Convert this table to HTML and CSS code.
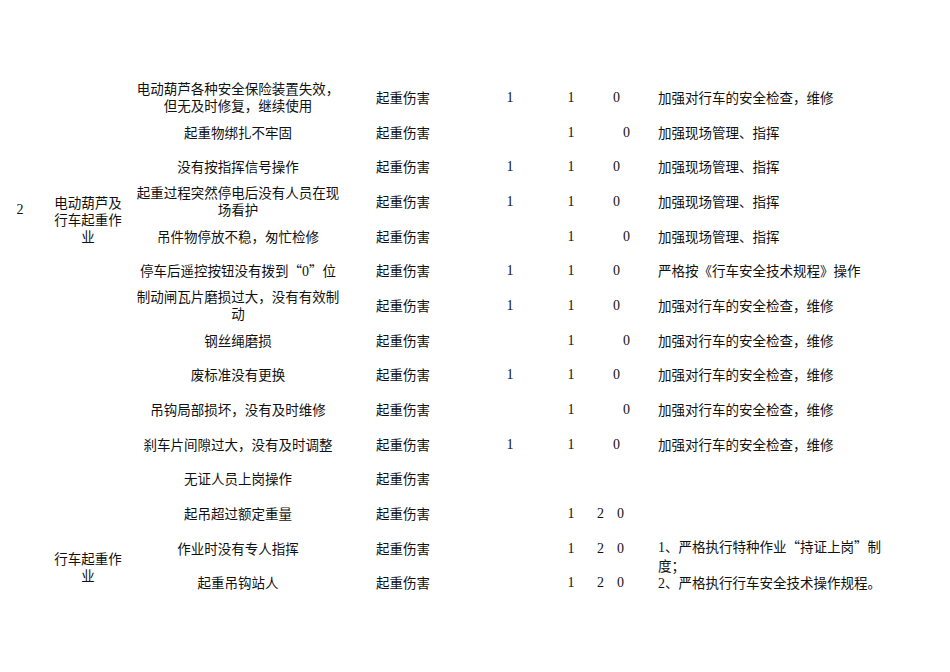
FILE: index.html
```html
<!DOCTYPE html>
<html lang="zh-CN">
<head>
<meta charset="utf-8">
<link rel="stylesheet" href="styles.css">
<title>危险源辨识</title>
</head>
<body>
<div class="sheet">
  <!-- row 1 -->
  <div class="c c1 span8"><span class="n">2</span></div>
  <div class="c c2 span8"><p class="t">电动葫芦及<br>行车起重作<br>业</p></div>
  <div class="c c3"><p class="t">电动葫芦各种安全保险装置失效，<br>但无及时修复，继续使用</p></div>
  <div class="c c4">起重伤害</div>
  <div class="c c5 n">1</div>
  <div class="c c6 n">1</div>
  <div class="c c7 n">0</div>
  <div class="c c8">加强对行车的安全检查，维修</div>
  <!-- row 2 -->
  <div class="c c3">起重物绑扎不牢固</div>
  <div class="c c4">起重伤害</div>
  <div class="c c5 n"></div>
  <div class="c c6 n">1</div>
  <div class="c c7 n shift">0</div>
  <div class="c c8">加强现场管理、指挥</div>
  <!-- row 3 -->
  <div class="c c3">没有按指挥信号操作</div>
  <div class="c c4">起重伤害</div>
  <div class="c c5 n">1</div>
  <div class="c c6 n">1</div>
  <div class="c c7 n">0</div>
  <div class="c c8">加强现场管理、指挥</div>
  <!-- row 4 -->
  <div class="c c3"><p class="t">起重过程突然停电后没有人员在现<br>场看护</p></div>
  <div class="c c4">起重伤害</div>
  <div class="c c5 n">1</div>
  <div class="c c6 n">1</div>
  <div class="c c7 n">0</div>
  <div class="c c8">加强现场管理、指挥</div>
  <!-- row 5 -->
  <div class="c c3">吊件物停放不稳，匆忙检修</div>
  <div class="c c4">起重伤害</div>
  <div class="c c5 n"></div>
  <div class="c c6 n">1</div>
  <div class="c c7 n shift">0</div>
  <div class="c c8">加强现场管理、指挥</div>
  <!-- row 6 -->
  <div class="c c3"><p class="t">停车后遥控按钮没有拨到“<span class="n">0</span>”位</p></div>
  <div class="c c4">起重伤害</div>
  <div class="c c5 n">1</div>
  <div class="c c6 n">1</div>
  <div class="c c7 n">0</div>
  <div class="c c8">严格按《行车安全技术规程》操作</div>
  <!-- row 7 -->
  <div class="c c3"><p class="t">制动闸瓦片磨损过大，没有有效制<br>动</p></div>
  <div class="c c4">起重伤害</div>
  <div class="c c5 n">1</div>
  <div class="c c6 n">1</div>
  <div class="c c7 n">0</div>
  <div class="c c8">加强对行车的安全检查，维修</div>
  <!-- row 8 -->
  <div class="c c3">钢丝绳磨损</div>
  <div class="c c4">起重伤害</div>
  <div class="c c5 n"></div>
  <div class="c c6 n">1</div>
  <div class="c c7 n shift">0</div>
  <div class="c c8">加强对行车的安全检查，维修</div>
  <!-- row 9 -->
  <div class="c c1"></div>
  <div class="c c2"></div>
  <div class="c c3">废标准没有更换</div>
  <div class="c c4">起重伤害</div>
  <div class="c c5 n">1</div>
  <div class="c c6 n">1</div>
  <div class="c c7 n">0</div>
  <div class="c c8">加强对行车的安全检查，维修</div>
  <!-- row 10 -->
  <div class="c c1"></div>
  <div class="c c2"></div>
  <div class="c c3">吊钩局部损坏，没有及时维修</div>
  <div class="c c4">起重伤害</div>
  <div class="c c5 n"></div>
  <div class="c c6 n">1</div>
  <div class="c c7 n shift">0</div>
  <div class="c c8">加强对行车的安全检查，维修</div>
  <!-- row 11 -->
  <div class="c c1"></div>
  <div class="c c2"></div>
  <div class="c c3">刹车片间隙过大，没有及时调整</div>
  <div class="c c4">起重伤害</div>
  <div class="c c5 n">1</div>
  <div class="c c6 n">1</div>
  <div class="c c7 n">0</div>
  <div class="c c8">加强对行车的安全检查，维修</div>
  <!-- row 12 -->
  <div class="c c1"></div>
  <div class="c c2"></div>
  <div class="c c3">无证人员上岗操作</div>
  <div class="c c4">起重伤害</div>
  <div class="c c5 n"></div>
  <div class="c c6 n"></div>
  <div class="c c7 n"></div>
  <div class="c c8"></div>
  <!-- row 13 -->
  <div class="c c1"></div>
  <div class="c c2"></div>
  <div class="c c3">起吊超过额定重量</div>
  <div class="c c4">起重伤害</div>
  <div class="c c5 n"></div>
  <div class="c c6 n">1</div>
  <div class="c c7 n tight"><span>2</span><span class="gap">0</span></div>
  <div class="c c8"></div>
  <!-- row 14 -->
  <div class="c c1 span2"></div>
  <div class="c c2 span2"><p class="t">行车起重作<br>业</p></div>
  <div class="c c3">作业时没有专人指挥</div>
  <div class="c c4">起重伤害</div>
  <div class="c c5 n"></div>
  <div class="c c6 n">1</div>
  <div class="c c7 n tight"><span>2</span><span class="gap">0</span></div>
  <div class="c c8 span2 wrap"><p class="t"><span class="n">1</span>、严格执行特种作业“持证上岗”制<br>度；<br><span class="n">2</span>、严格执行行车安全技术操作规程。</p></div>
  <!-- row 15 -->
  <div class="c c3">起重吊钩站人</div>
  <div class="c c4">起重伤害</div>
  <div class="c c5 n"></div>
  <div class="c c6 n">1</div>
  <div class="c c7 n tight"><span>2</span><span class="gap">0</span></div>
</div>
</body>
</html>
```

FILE: styles.css
```css
html, body {
  margin: 0;
  padding: 0;
  background: #ffffff;
}

body {
  width: 950px;
  height: 672px;
  overflow: hidden;
  font-family: "Noto Sans CJK SC", "Noto Sans CJK JP", sans-serif;
  font-size: 13.5px;
  color: #111111;
}

.sheet {
  display: grid;
  grid-template-columns: 40px 96px 204px 126px 88px 34px 70px 1fr;
  grid-auto-rows: 34.7px;
  padding-top: 80px;
}

.c {
  display: flex;
  align-items: center;
  justify-content: center;
  text-align: center;
  line-height: 17px;
  white-space: nowrap;
}

.t {
  margin: 0;
}

.n {
  font-family: "Liberation Serif", "Times New Roman", serif;
  font-size: 14px;
}

.span8 { grid-row: span 8; }
.span2 { grid-row: span 2; }

.c1 { grid-column: 1; padding-bottom: 18px; }
.c2 { grid-column: 2; padding-top: 2px; }
.c3 { grid-column: 3; }
.c4 { grid-column: 4; }
.c5 { grid-column: 5; }
.c6 { grid-column: 6; }

.c7 {
  grid-column: 7;
  justify-content: flex-start;
  padding-left: 25px;
}
.c7.shift { padding-left: 35px; }
.c7.tight { padding-left: 9px; }
.c7 .gap { margin-left: 13px; }

.c8 {
  grid-column: 8;
  justify-content: flex-start;
  text-align: left;
}
.c8.wrap { line-height: 17.5px; }
```
